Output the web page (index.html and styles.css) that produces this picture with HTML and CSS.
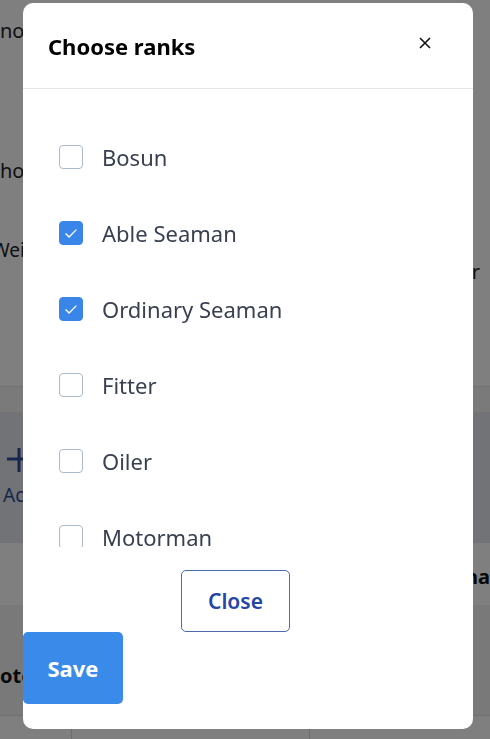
FILE: index.html
```html
<!DOCTYPE html>
<html lang="en">
<head>
<meta charset="utf-8">
<title>Choose ranks</title>
<link rel="stylesheet" href="styles.css">
</head>
<body>
<div class="page">
  <div class="row r1"><span class="bg-text">no</span></div>
  <div class="row r2"><span class="bg-text">hoo</span></div>
  <div class="row r3"><span class="bg-text w">Weig</span><span class="bg-text right">r</span></div>
  <div class="row r4"></div>
  <div class="row r5">
    <div class="add">
      <svg class="plus" viewBox="0 0 24 24" width="24" height="26"><path d="M12 1v24M0 12h24" stroke="#2f4f96" stroke-width="3" fill="none"/></svg>
      <span class="add-text">Ac</span>
    </div>
  </div>
  <div class="row r6"><span class="bg-bold right2">na</span></div>
  <div class="row r7"><span class="bg-bold">ote</span></div>
  <div class="row r8"><span class="cell c1"></span><span class="cell c2"></span></div>
</div>

<div class="overlay">
  <div class="modal">
    <div class="modal-header">
      <h2 class="title">Choose ranks</h2>
      <button class="x-btn" aria-label="Close">
        <svg viewBox="0 0 16 16" width="16" height="16"><path d="M3 3l10 10M13 3L3 13" stroke="#111" stroke-width="1.6" fill="none"/></svg>
      </button>
    </div>
    <div class="modal-body">
      <ul class="list">
        <li class="item"><span class="box"></span><span class="label">Bosun</span></li>
        <li class="item"><span class="box checked"><svg viewBox="0 0 16 16" width="18" height="18"><path d="M3.2 8.4l3.1 3.1L12.8 5" stroke="#fff" stroke-width="1.2" fill="none"/></svg></span><span class="label">Able Seaman</span></li>
        <li class="item"><span class="box checked"><svg viewBox="0 0 16 16" width="18" height="18"><path d="M3.2 8.4l3.1 3.1L12.8 5" stroke="#fff" stroke-width="1.2" fill="none"/></svg></span><span class="label">Ordinary Seaman</span></li>
        <li class="item"><span class="box"></span><span class="label">Fitter</span></li>
        <li class="item"><span class="box"></span><span class="label">Oiler</span></li>
        <li class="item"><span class="box"></span><span class="label">Motorman</span></li>
        <li class="item"><span class="box"></span><span class="label">Wiper</span></li>
      </ul>
    </div>
    <div class="modal-footer">
      <button class="btn-close">Close</button>
      <button class="btn-save">Save</button>
    </div>
  </div>
</div>
</body>
</html>
```
FILE: styles.css
```css
* { box-sizing: border-box; }
html, body { margin: 0; padding: 0; }
body {
  width: 490px;
  height: 739px;
  overflow: hidden;
  font-family: "Noto Sans", "Open Sans", sans-serif;
  background: #fff;
  position: relative;
}
.page { display: flex; flex-direction: column; }
.row { position: relative; display: flex; align-items: center; }
.r1 { height: 80px; }
.r2 { height: 140px; }
.r3 { height: 166px; }
.r4 { height: 27px; background: #f4f4f4; border-top: 1px solid #e8e8e8; border-bottom: 1px solid #e6e6e6; }
.r5 { height: 130px; background: #e3e6ee; }
.r6 { height: 62px; background: #fff; }
.r7 { height: 110px; background: #f3f3f5; }
.r8 { height: 24px; background: #fff; border-top: 1px solid #e0e0e0; }
.bg-text { font-size: 20px; color: #222; margin-left: 0; }
.r1 .bg-text { margin-top: -20px; }
.r2 .bg-text { margin-top: 40px; }
.r3 .bg-text.w { margin-top: -106px; margin-left: -8px; font-size: 19px; }
.bg-text.right { position: absolute; right: 10px; top: 38px; margin: 0; }
.add { display: flex; flex-direction: column; align-items: flex-start; padding-left: 7px; margin-top: -2px; }
.add-text { color: #2f4f96; font-size: 19px; margin-top: 10px; margin-left: -4px; }
.bg-bold { font-weight: 700; font-size: 20px; color: #111; }
.right2 { position: absolute; right: 0; top: 20px; }
.r7 .bg-bold { margin-left: 0; margin-top: 30px; }
.cell { height: 100%; border-right: 1px solid #d8d8d8; }
.c1 { width: 72px; }
.c2 { width: 238px; }

.overlay {
  position: fixed;
  inset: 0;
  background: rgba(0, 0, 0, 0.5);
}
.modal {
  margin: 3px 0 0 23px;
  width: 450px;
  height: 726px;
  background: #fff;
  border-radius: 10px;
  display: flex;
  flex-direction: column;
  overflow: hidden;
}
.modal-header {
  height: 86px;
  flex: none;
  display: flex;
  align-items: center;
  justify-content: space-between;
  padding: 0 40px 0 25px;
  border-bottom: 1px solid #e5e5e5;
}
.title {
  margin: 0;
  font-size: 22px;
  font-weight: 700;
  color: #000;
  padding-bottom: 0;
}
.x-btn {
  border: 0;
  background: none;
  padding: 0;
  display: flex;
  margin-bottom: 6px;
}
.modal-body {
  height: 458px;
  flex: none;
  overflow: hidden;
}
.list {
  list-style: none;
  margin: 0;
  padding: 30px 0 0 36px;
}
.item {
  height: 76px;
  display: flex;
  align-items: center;
}
.box {
  width: 24px;
  height: 24px;
  border: 1px solid #a9bccd;
  border-radius: 4px;
  display: flex;
  align-items: center;
  justify-content: center;
  flex: none;
}
.box.checked {
  background: #3a86e8;
  border-color: #3a86e8;
}
.label {
  margin-left: 19px;
  font-size: 22px;
  color: #394150;
}
.modal-footer {
  display: flex;
  flex-direction: column;
  align-items: flex-start;
  padding-top: 23px;
}
.btn-close {
  margin-left: 158px;
  width: 109px;
  height: 62px;
  border: 1px solid #4a6bb0;
  border-radius: 5px;
  background: #fff;
  color: #2446a8;
  font-family: inherit;
  font-size: 21px;
  font-weight: 600;
}
.btn-save {
  width: 100px;
  height: 72px;
  border: 0;
  border-radius: 5px;
  background: #3a8aea;
  color: #fff;
  font-family: inherit;
  font-size: 22px;
  font-weight: 700;
}
```
